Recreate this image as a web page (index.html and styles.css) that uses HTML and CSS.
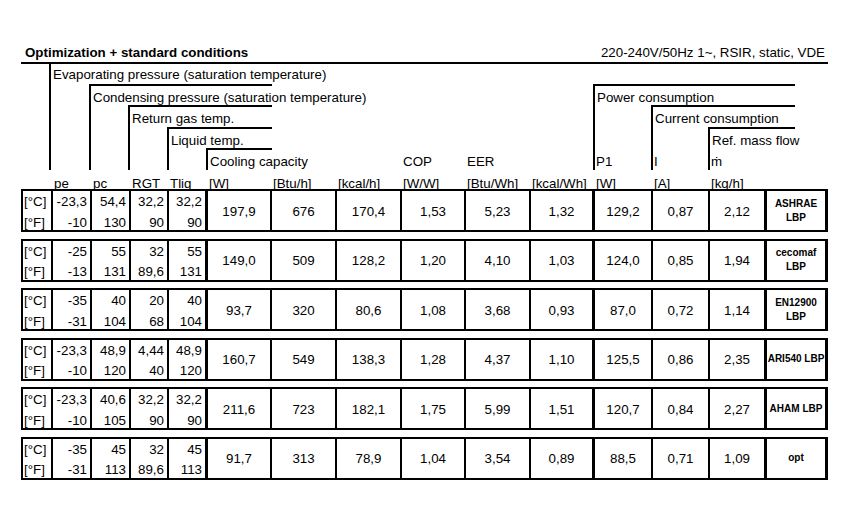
FILE: index.html
```html
<!DOCTYPE html>
<html lang="en">
<head>
<meta charset="utf-8">
<title>Optimization + standard conditions</title>
<link rel="stylesheet" href="styles.css">
</head>
<body>
<div class="page">
  <div class="titlebar">
    <span class="title">Optimization + standard conditions</span>
    <span class="spec">220-240V/50Hz 1~, RSIR, static, VDE</span>
  </div>

  <div class="head">
    <div class="h evap">Evaporating pressure (saturation temperature)</div>
    <div class="h cond">Condensing pressure (saturation temperature)</div>
    <div class="h rgt">Return gas temp.</div>
    <div class="h liq">Liquid temp.</div>
    <div class="h cool">Cooling capacity</div>
    <div class="t c9 r5">COP</div>
    <div class="t c10 r5">EER</div>
    <div class="h power">Power consumption</div>
    <div class="h current">Current consumption</div>
    <div class="h mass">Ref. mass flow</div>
    <div class="t c12 r5">P1</div>
    <div class="t c13 r5">I</div>
    <div class="t c14 r5">ṁ</div>

    <div class="t c2 r6">pe</div>
    <div class="t c3 r6">pc</div>
    <div class="t c4 r6">RGT</div>
    <div class="t c5 r6">Tliq</div>
    <div class="t c6 r6">[W]</div>
    <div class="t c7 r6">[Btu/h]</div>
    <div class="t c8 r6">[kcal/h]</div>
    <div class="t c9 r6">[W/W]</div>
    <div class="t c10 r6">[Btu/Wh]</div>
    <div class="t c11 r6">[kcal/Wh]</div>
    <div class="t c12 r6">[W]</div>
    <div class="t c13 r6">[A]</div>
    <div class="t c14 r6">[kg/h]</div>
  </div>

  <div class="blocks">
    <div class="blk">
      <div class="u">[°C]</div><div class="n">-23,3</div><div class="n">54,4</div><div class="n">32,2</div><div class="n thick">32,2</div>
      <div class="sp thick-l">197,9</div><div class="sp">676</div><div class="sp">170,4</div><div class="sp">1,53</div><div class="sp">5,23</div><div class="sp thick">1,32</div>
      <div class="sp">129,2</div><div class="sp">0,87</div><div class="sp thick">2,12</div><div class="lbl">ASHRAE<br>LBP</div>
      <div class="u r2">[°F]</div><div class="n r2">-10</div><div class="n r2">130</div><div class="n r2">90</div><div class="n r2 thick">90</div>
    </div>
    <div class="blk">
      <div class="u">[°C]</div><div class="n">-25</div><div class="n">55</div><div class="n">32</div><div class="n thick">55</div>
      <div class="sp">149,0</div><div class="sp">509</div><div class="sp">128,2</div><div class="sp">1,20</div><div class="sp">4,10</div><div class="sp thick">1,03</div>
      <div class="sp">124,0</div><div class="sp">0,85</div><div class="sp thick">1,94</div><div class="lbl">cecomaf<br>LBP</div>
      <div class="u r2">[°F]</div><div class="n r2">-13</div><div class="n r2">131</div><div class="n r2">89,6</div><div class="n r2 thick">131</div>
    </div>
    <div class="blk">
      <div class="u">[°C]</div><div class="n">-35</div><div class="n">40</div><div class="n">20</div><div class="n thick">40</div>
      <div class="sp">93,7</div><div class="sp">320</div><div class="sp">80,6</div><div class="sp">1,08</div><div class="sp">3,68</div><div class="sp thick">0,93</div>
      <div class="sp">87,0</div><div class="sp">0,72</div><div class="sp thick">1,14</div><div class="lbl">EN12900<br>LBP</div>
      <div class="u r2">[°F]</div><div class="n r2">-31</div><div class="n r2">104</div><div class="n r2">68</div><div class="n r2 thick">104</div>
    </div>
    <div class="blk">
      <div class="u">[°C]</div><div class="n">-23,3</div><div class="n">48,9</div><div class="n">4,44</div><div class="n thick">48,9</div>
      <div class="sp">160,7</div><div class="sp">549</div><div class="sp">138,3</div><div class="sp">1,28</div><div class="sp">4,37</div><div class="sp thick">1,10</div>
      <div class="sp">125,5</div><div class="sp">0,86</div><div class="sp thick">2,35</div><div class="lbl">ARI540 LBP</div>
      <div class="u r2">[°F]</div><div class="n r2">-10</div><div class="n r2">120</div><div class="n r2">40</div><div class="n r2 thick">120</div>
    </div>
    <div class="blk">
      <div class="u">[°C]</div><div class="n">-23,3</div><div class="n">40,6</div><div class="n">32,2</div><div class="n thick">32,2</div>
      <div class="sp">211,6</div><div class="sp">723</div><div class="sp">182,1</div><div class="sp">1,75</div><div class="sp">5,99</div><div class="sp thick">1,51</div>
      <div class="sp">120,7</div><div class="sp">0,84</div><div class="sp thick">2,27</div><div class="lbl">AHAM LBP</div>
      <div class="u r2">[°F]</div><div class="n r2">-10</div><div class="n r2">105</div><div class="n r2">90</div><div class="n r2 thick">90</div>
    </div>
    <div class="blk">
      <div class="u">[°C]</div><div class="n">-35</div><div class="n">45</div><div class="n">32</div><div class="n thick">45</div>
      <div class="sp">91,7</div><div class="sp">313</div><div class="sp">78,9</div><div class="sp">1,04</div><div class="sp">3,54</div><div class="sp thick">0,89</div>
      <div class="sp">88,5</div><div class="sp">0,71</div><div class="sp thick">1,09</div><div class="lbl">opt</div>
      <div class="u r2">[°F]</div><div class="n r2">-31</div><div class="n r2">113</div><div class="n r2">89,6</div><div class="n r2 thick">113</div>
    </div>
  </div>
</div>
</body>
</html>
```

FILE: styles.css
```css
html, body {
  margin: 0;
  padding: 0;
  background: #ffffff;
}

body {
  font-family: "Liberation Sans", Arial, sans-serif;
  font-size: 13.33px;
  color: #000;
}

.page {
  width: 807px;
  padding: 45px 0 0 21px;
}

.titlebar {
  display: flex;
  justify-content: space-between;
  height: 16px;
  line-height: 16px;
  padding: 0 3px 0 4px;
  margin-bottom: 1px;
}

.title {
  font-weight: bold;
}

/* ---------- header bracket area ---------- */
.head {
  display: grid;
  grid-template-columns: 30px 39px 39px 38px 39px 64px 65px 65px 64px 65px 64px 58px 57px 57px 58px;
  grid-template-rows: 19.5px repeat(4, 21.5px) 19.5px;
  border-top: 2px solid #000;
  padding: 0 3px 0 2px;
}

.h {
  white-space: nowrap;
  border-left: 2px solid #000;
  border-top: 2px solid #000;
  padding: 4px 0 0 2px;
  line-height: 16px;
}

.evap {
  grid-column: 2 / 3;
  grid-row: 1 / 6;
  margin-left: -4px;
  border-top: none;
  padding-top: 3px;
}
.cond    { grid-column: 3 / 7;  grid-row: 2 / 6; margin-left: -3px; }
.rgt     { grid-column: 4 / 7;  grid-row: 3 / 6; margin-left: -3px; }
.liq     { grid-column: 5 / 7;  grid-row: 4 / 6; margin-left: -2px; }
.cool    { grid-column: 6 / 7;  grid-row: 5 / 6; margin-left: -2px; }
.power   { grid-column: 12 / 16; grid-row: 2 / 6; margin-left: -2px; margin-right: 30px; }
.current { grid-column: 13 / 16; grid-row: 3 / 6; margin-left: -2px; margin-right: 30px; }
.mass    { grid-column: 14 / 16; grid-row: 4 / 6; margin-left: -2px; margin-right: 30px; }

.t {
  white-space: nowrap;
  padding: 6px 0 0 1px;
  line-height: 16px;
}

.r5 { grid-row: 5; }
.r6 { grid-row: 6; }
.c2 { grid-column: 2; }
.c3 { grid-column: 3; }
.c4 { grid-column: 4; }
.c5 { grid-column: 5; }
.c6 { grid-column: 6; }
.c7 { grid-column: 7; }
.c8 { grid-column: 8; }
.c9 { grid-column: 9; }
.c10 { grid-column: 10; }
.c11 { grid-column: 11; }
.c12 { grid-column: 12; }
.c13 { grid-column: 13; }
.c14 { grid-column: 14; }

/* ---------- data blocks ---------- */
.blocks {
  display: flex;
  flex-direction: column;
  gap: 6.6px;
}

.blk {
  display: grid;
  grid-template-columns: 30px 39px 39px 38px 39px 64px 65px 65px 64px 65px 64px 58px 57px 57px 58px;
  grid-template-rows: 19.5px 19.5px;
  border: 2px solid #000;
  border-right-width: 3px;
}

.blk > div {
  border-right: 2px solid #000;
  line-height: 16px;
  white-space: nowrap;
}

.blk > .thick {
  border-right-width: 3px;
}

.u {
  padding: 3px 0 0 1px;
}

.n {
  text-align: right;
  padding: 3px 3px 0 0;
}

.blk > .r2 {
  padding-top: 4px;
}

.sp {
  grid-row: span 2;
  display: flex;
  align-items: center;
  justify-content: center;
  padding-top: 2px;
}

.blk > .lbl {
  grid-row: span 2;
  border-right: none;
  display: flex;
  align-items: center;
  justify-content: center;
  text-align: center;
  font-weight: bold;
  font-size: 10px;
  line-height: 14px;
  white-space: nowrap;
}
```
